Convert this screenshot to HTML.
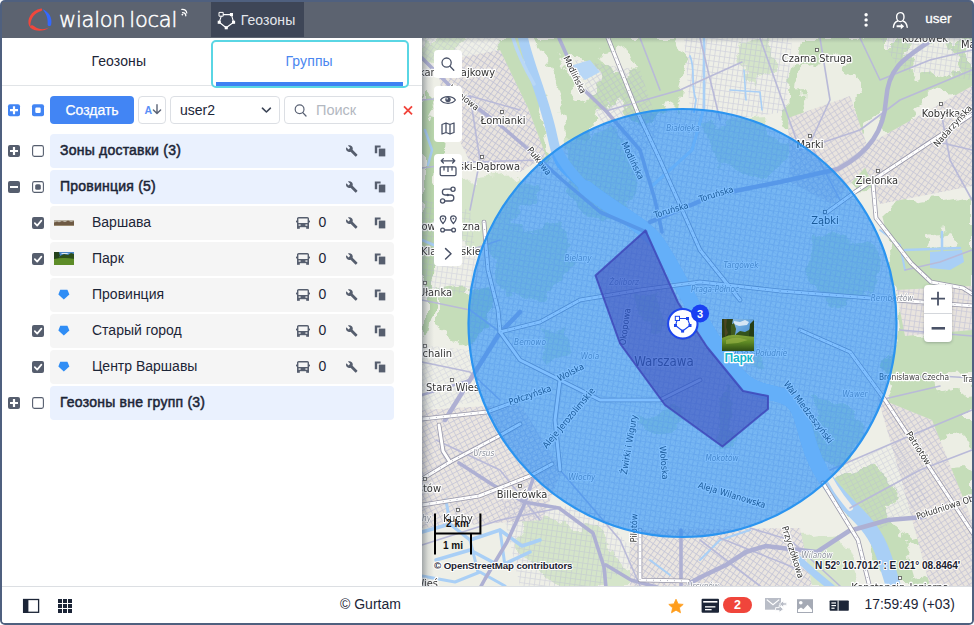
<!DOCTYPE html>
<html lang="ru">
<head>
<meta charset="utf-8">
<title>Wialon Local</title>
<style>
*{box-sizing:border-box;margin:0;padding:0}
html,body{width:974px;height:625px;overflow:hidden;background:#fff;font-family:"Liberation Sans",sans-serif;color:#1c2537}
#frame{position:absolute;left:0;top:0;width:974px;height:624.5px;background:#4f607f;border-radius:5px;overflow:hidden}
#inner{position:absolute;left:2px;top:2px;width:970px;height:620.5px;background:#fff;border-radius:0 0 3px 3px;overflow:hidden}
.abs{position:absolute}
/* header */
#hdr{position:absolute;left:0;top:0;width:970px;height:36px;background:#5c6370}
#hdr .tab{position:absolute;left:209px;top:0;width:93px;height:35px;background:#3e4657}
#hdr .tab span{position:absolute;left:29.7px;top:10px;font-size:14px;color:#e4e7ec;letter-spacing:0.1px}
#hdr .user{position:absolute;left:923.3px;top:9px;font-size:13.5px;color:#fff;-webkit-text-stroke:.3px #fff}
/* left panel */
#left{position:absolute;left:0;top:36px;width:420px;height:548px;background:#fff}
.t1{position:absolute;left:89.4px;top:14.8px;font-size:14px;letter-spacing:.12px;color:#1c2537}
.t2box{position:absolute;left:208.6px;top:2.2px;width:198.6px;height:48.2px;border:2px solid #5ad6e4;border-radius:5px;background:#fff}
.t2{position:absolute;left:283.4px;top:14.8px;font-size:14px;letter-spacing:.12px;color:#4a86f0}
.t2line{position:absolute;left:214px;top:44px;width:187px;height:4px;background:#3f82f3}
.btn{position:absolute;left:48px;top:58px;width:84px;height:28px;background:#4285f4;border-radius:4px;color:#fff;font-size:14px;text-align:center;line-height:28px;-webkit-text-stroke:.25px #fff}
.ib{position:absolute;top:58px;height:28px;border:1px solid #dcdfe4;border-radius:4px;background:#fff}
.row{position:absolute;left:48px;width:344px;height:34px;border-radius:4px}
.g{background:#eaf1fe}
.i{background:#f5f5f5}
.row .nm{position:absolute;top:8.3px;font-size:14px;white-space:nowrap;color:#1c2537}
.g .nm{left:10px;font-weight:normal;font-size:14px;letter-spacing:0.22px;-webkit-text-stroke:.5px #1c2537}
.i .nm{left:42px}
.row .cnt{position:absolute;left:268.5px;top:8.3px;font-size:14px;color:#1c2537}
.ic{position:absolute}
/* footer */
#ftr{position:absolute;left:0;top:584px;width:970px;height:37px;background:#fff;border-top:1px solid #dcdfe3}
#ftr .cp{position:absolute;left:338px;top:8.8px;font-size:14px;color:#1c2537}
#ftr .tm{position:absolute;left:862.6px;top:9.8px;font-size:13.8px;color:#1c2537}
/* map */
#map{position:absolute;left:420px;top:36px;width:550px;height:548px;overflow:hidden;background:#eef0e4}
.mb{position:absolute;left:12px;width:28px;background:#fff;border-radius:4px}
</style>
</head>
<body>
<div id="frame"><div id="inner">

<div id="hdr">
  <div class="tab"><span>Геозоны</span></div>
  <div class="user">user</div>
<svg width="970" height="36" viewBox="2 2 970 36" style="position:absolute;left:0;top:0" fill="none" stroke-linecap="round" stroke-linejoin="round">
<!-- logo mark -->
<path d="M29.2,26 C26.6,19.8 30.6,10.6 41,8.6 C42.6,8.4 42.6,10.6 41.2,11 C34,13 30.6,18.6 30.4,25.6 C30.4,26.6 29.6,26.8 29.2,26Z" fill="#f0473c"/>
<path d="M29.8,26.4 C31.4,24.4 33.4,25.6 34.6,26.6 C38.6,29.6 44,30.2 48.8,27.6 C44.6,31.8 34.6,32 30.2,27.6 C29.8,27.2 29.6,26.8 29.8,26.4Z" fill="#f0473c"/>
<path d="M42.6,9.2 C48.6,11.6 52.6,17.4 51.2,24.4 C50.8,26.4 48,26.8 47.6,24.6 C48.2,18.6 46.4,13.6 42.6,9.2Z" fill="#3468ff"/>
<!-- signal -->
<path d="M182.6,12.6 a3.2,3.2 0 0 1 3.2,3.2" stroke="#fff" stroke-width="1.3"/>
<path d="M182.6,9.8 a6,6 0 0 1 6,6" stroke="#fff" stroke-width="1.3" opacity=".0"/>
<path d="M181.8,9.4 c2.8,-.2 4.6,1.2 5,3.6" stroke="#fff" stroke-width="1.2"/>
<circle cx="182.4" cy="14.6" r=".9" fill="#fff"/>
<!-- geofence icon -->
<g stroke="#fff" stroke-width="1.1">
<path d="M223.4,14.6 H231.4 L233.6,22.2 L226.2,27.8 L219.2,22.2 L221.2,16.4"/>
<rect x="219.4" y="12.4" width="3.8" height="3.8" stroke-width="1"/>
</g>
<g fill="#fff"><rect x="229.9" y="13" width="3.1" height="3.1"/><rect x="232" y="20.7" width="3.1" height="3.1"/><rect x="224.7" y="26.2" width="3.1" height="3.1"/><rect x="217.7" y="20.7" width="3.1" height="3.1"/></g>
<!-- dots -->
<g fill="#fff"><circle cx="866.1" cy="14.7" r="1.7"/><circle cx="866.1" cy="19.9" r="1.7"/><circle cx="866.1" cy="25.1" r="1.7"/></g>
<!-- user -->
<g stroke="#fff" stroke-width="1.4">
<path d="M900.3,12.6 c2.4,0 3.7,1.9 3.7,4.3 c0,2.5 -1.6,4.7 -3.7,4.7 c-2.1,0 -3.7,-2.2 -3.7,-4.7 c0,-2.4 1.3,-4.3 3.7,-4.3z"/>
<path d="M897.6,21 c-2.6,1 -3.9,3 -4.2,6.2 M903,21 c2.6,1 3.9,3 4.2,6.2"/>
</g>
<path d="M896.6,25.3 h4.2 v-1.9 l3.4,2.9 l-3.4,2.9 v-1.9 h-4.2z" fill="#fff"/>
</svg>
<div class="abs" style="left:57px;top:5.6px;font:200 21px 'DejaVu Sans Light','DejaVu Sans',sans-serif;font-weight:200;color:#fff;letter-spacing:-.25px;word-spacing:-2.5px;white-space:nowrap;-webkit-text-stroke:.5px #fff" id="logo">wialon local</div>

</div>

<div id="left">
  <div class="abs" style="left:0;top:47px;width:420px;height:1px;background:#e1e4e7"></div>
  <div class="t1">Геозоны</div>
  <div class="t2box"></div>
  <div class="t2">Группы</div>
  <div class="t2line"></div>
  <div class="btn">Создать</div>
  <div class="ib" style="left:136px;width:28px"></div>
  <div class="ib" style="left:168px;width:110px"><span class="abs" style="left:9px;top:5px;font-size:14px">user2</span></div>
  <div class="ib" style="left:282px;width:110px"><span class="abs" style="left:31px;top:5px;font-size:14.5px;color:#b3b8c1">Поиск</span></div>

  <div class="row g" style="top:95.7px"><span class="nm">Зоны доставки (3)</span></div>
  <div class="row g" style="top:131.7px"><span class="nm">Провинция (5)</span></div>
  <div class="row i" style="top:167.7px"><span class="nm">Варшава</span><span class="cnt">0</span></div>
  <div class="row i" style="top:203.7px"><span class="nm">Парк</span><span class="cnt">0</span></div>
  <div class="row i" style="top:239.7px"><span class="nm">Провинция</span><span class="cnt">0</span></div>
  <div class="row i" style="top:275.7px"><span class="nm">Старый город</span><span class="cnt">0</span></div>
  <div class="row i" style="top:311.7px"><span class="nm">Центр Варшавы</span><span class="cnt">0</span></div>
  <div class="row g" style="top:347.7px"><span class="nm">Геозоны вне групп (3)</span></div>
<svg width="420" height="548" viewBox="2 38 420 548" style="position:absolute;left:0;top:0;pointer-events:none" fill="none">
<rect x="8" y="104.2" width="12" height="12" rx="2" fill="#4285f4"/><path d="M14,106.2 V114.2 M10,110.2 H18" stroke="#fff" stroke-width="2.2"/>
<rect x="32" y="104.2" width="12" height="12" rx="2" fill="#4285f4"/><rect x="35.3" y="107.5" width="5.4" height="5.4" rx="1.2" fill="#fff"/>
<text x="144.4" y="113.6" style="font:bold 10.5px 'Liberation Sans',sans-serif;fill:#5b8ff7">A</text>
<path d="M157,104.8 V113.4 M153.4,110 L157,113.6 L160.6,110" stroke="#5a6274" stroke-width="1.4" stroke-linecap="round" stroke-linejoin="round"/>
<path d="M262.4,108.2 L266.4,112 L270.4,108.2" stroke="#3c4456" stroke-width="1.6" stroke-linecap="round" stroke-linejoin="round"/>
<circle cx="299.6" cy="109.2" r="4.4" stroke="#5a6274" stroke-width="1.2"/><path d="M302.8,112.6 L306,116" stroke="#5a6274" stroke-width="1.3" stroke-linecap="round"/>
<path d="M404,106.4 L412,114.4 M412,106.4 L404,114.4" stroke="#f1433a" stroke-width="1.8" stroke-linecap="butt"/>
<rect x="8" y="145" width="12" height="12" rx="2" fill="#565e6e"/><path d="M14,147 V155 M10,151 H18" stroke="#fff" stroke-width="2.2"/><rect x="32.6" y="145.6" width="10.8" height="10.8" rx="1.8" fill="#fff" stroke="#565e6e" stroke-width="1.1"/><path transform="translate(345.5,144.7) scale(.52)" fill="#565e6e" d="M22.7 19l-9.1-9.1c.9-2.3.4-5-1.5-6.9-2-2-5-2.4-7.4-1.3L9 6 6 9 1.6 4.7C.4 7.1.9 10.1 2.9 12.1c1.9 1.9 4.6 2.4 6.9 1.5l9.1 9.1c.4.4 1 .4 1.4 0l2.3-2.3c.5-.4.5-1.1.1-1.4z"/><g transform="translate(374.8,145.6)" fill="#565e6e"><path d="M0,0 H5.8 V1.8 H2.4 V7.6 H0Z"/><rect x="4" y="3" width="6.5" height="7.8"/></g>
<rect x="8" y="181" width="12" height="12" rx="2" fill="#565e6e"/><path d="M10,187 H18" stroke="#fff" stroke-width="2.2"/><rect x="32.6" y="181.6" width="10.8" height="10.8" rx="1.8" fill="#fff" stroke="#565e6e" stroke-width="1.1"/><rect x="35.2" y="184.2" width="5.6" height="5.6" rx="1.6" fill="#565e6e"/><path transform="translate(345.5,180.7) scale(.52)" fill="#565e6e" d="M22.7 19l-9.1-9.1c.9-2.3.4-5-1.5-6.9-2-2-5-2.4-7.4-1.3L9 6 6 9 1.6 4.7C.4 7.1.9 10.1 2.9 12.1c1.9 1.9 4.6 2.4 6.9 1.5l9.1 9.1c.4.4 1 .4 1.4 0l2.3-2.3c.5-.4.5-1.1.1-1.4z"/><g transform="translate(374.8,181.6)" fill="#565e6e"><path d="M0,0 H5.8 V1.8 H2.4 V7.6 H0Z"/><rect x="4" y="3" width="6.5" height="7.8"/></g>
<rect x="32" y="217" width="12" height="12" rx="2" fill="#565e6e"/><path d="M34.8,223.2 L37.2,225.6 L41.4,220.6" stroke="#fff" stroke-width="1.7" stroke-linecap="round" stroke-linejoin="round"/>
<g transform="translate(296,217)"><path d="M1.7,6.2 V1.6 C1.7,1 2.1,.7 2.7,.7 H11.3 C11.9,.7 12.3,1 12.3,1.6 V6.2" fill="none" stroke="#565e6e" stroke-width="1.4"/><rect x="1" y="6" width="12" height="4.2" fill="#565e6e"/><rect x="0" y="3.6" width="1.2" height="1.8" fill="#565e6e"/><rect x="12.8" y="3.6" width="1.2" height="1.8" fill="#565e6e"/><rect x="1" y="10" width="2.8" height="1.8" fill="#565e6e"/><rect x="10.2" y="10" width="2.8" height="1.8" fill="#565e6e"/><rect x="2.6" y="7.4" width="2" height="1.3" fill="#f5f5f5"/><rect x="9.4" y="7.4" width="2" height="1.3" fill="#f5f5f5"/></g><path transform="translate(345.5,216.7) scale(.52)" fill="#565e6e" d="M22.7 19l-9.1-9.1c.9-2.3.4-5-1.5-6.9-2-2-5-2.4-7.4-1.3L9 6 6 9 1.6 4.7C.4 7.1.9 10.1 2.9 12.1c1.9 1.9 4.6 2.4 6.9 1.5l9.1 9.1c.4.4 1 .4 1.4 0l2.3-2.3c.5-.4.5-1.1.1-1.4z"/><g transform="translate(374.8,217.6)" fill="#565e6e"><path d="M0,0 H5.8 V1.8 H2.4 V7.6 H0Z"/><rect x="4" y="3" width="6.5" height="7.8"/></g>
<rect x="32" y="253" width="12" height="12" rx="2" fill="#565e6e"/><path d="M34.8,259.2 L37.2,261.6 L41.4,256.6" stroke="#fff" stroke-width="1.7" stroke-linecap="round" stroke-linejoin="round"/>
<g transform="translate(296,253)"><path d="M1.7,6.2 V1.6 C1.7,1 2.1,.7 2.7,.7 H11.3 C11.9,.7 12.3,1 12.3,1.6 V6.2" fill="none" stroke="#565e6e" stroke-width="1.4"/><rect x="1" y="6" width="12" height="4.2" fill="#565e6e"/><rect x="0" y="3.6" width="1.2" height="1.8" fill="#565e6e"/><rect x="12.8" y="3.6" width="1.2" height="1.8" fill="#565e6e"/><rect x="1" y="10" width="2.8" height="1.8" fill="#565e6e"/><rect x="10.2" y="10" width="2.8" height="1.8" fill="#565e6e"/><rect x="2.6" y="7.4" width="2" height="1.3" fill="#f5f5f5"/><rect x="9.4" y="7.4" width="2" height="1.3" fill="#f5f5f5"/></g><path transform="translate(345.5,252.7) scale(.52)" fill="#565e6e" d="M22.7 19l-9.1-9.1c.9-2.3.4-5-1.5-6.9-2-2-5-2.4-7.4-1.3L9 6 6 9 1.6 4.7C.4 7.1.9 10.1 2.9 12.1c1.9 1.9 4.6 2.4 6.9 1.5l9.1 9.1c.4.4 1 .4 1.4 0l2.3-2.3c.5-.4.5-1.1.1-1.4z"/><g transform="translate(374.8,253.6)" fill="#565e6e"><path d="M0,0 H5.8 V1.8 H2.4 V7.6 H0Z"/><rect x="4" y="3" width="6.5" height="7.8"/></g>
<g transform="translate(296,289)"><path d="M1.7,6.2 V1.6 C1.7,1 2.1,.7 2.7,.7 H11.3 C11.9,.7 12.3,1 12.3,1.6 V6.2" fill="none" stroke="#565e6e" stroke-width="1.4"/><rect x="1" y="6" width="12" height="4.2" fill="#565e6e"/><rect x="0" y="3.6" width="1.2" height="1.8" fill="#565e6e"/><rect x="12.8" y="3.6" width="1.2" height="1.8" fill="#565e6e"/><rect x="1" y="10" width="2.8" height="1.8" fill="#565e6e"/><rect x="10.2" y="10" width="2.8" height="1.8" fill="#565e6e"/><rect x="2.6" y="7.4" width="2" height="1.3" fill="#f5f5f5"/><rect x="9.4" y="7.4" width="2" height="1.3" fill="#f5f5f5"/></g><path transform="translate(345.5,288.7) scale(.52)" fill="#565e6e" d="M22.7 19l-9.1-9.1c.9-2.3.4-5-1.5-6.9-2-2-5-2.4-7.4-1.3L9 6 6 9 1.6 4.7C.4 7.1.9 10.1 2.9 12.1c1.9 1.9 4.6 2.4 6.9 1.5l9.1 9.1c.4.4 1 .4 1.4 0l2.3-2.3c.5-.4.5-1.1.1-1.4z"/><g transform="translate(374.8,289.6)" fill="#565e6e"><path d="M0,0 H5.8 V1.8 H2.4 V7.6 H0Z"/><rect x="4" y="3" width="6.5" height="7.8"/></g>
<rect x="32" y="325" width="12" height="12" rx="2" fill="#565e6e"/><path d="M34.8,331.2 L37.2,333.6 L41.4,328.6" stroke="#fff" stroke-width="1.7" stroke-linecap="round" stroke-linejoin="round"/>
<g transform="translate(296,325)"><path d="M1.7,6.2 V1.6 C1.7,1 2.1,.7 2.7,.7 H11.3 C11.9,.7 12.3,1 12.3,1.6 V6.2" fill="none" stroke="#565e6e" stroke-width="1.4"/><rect x="1" y="6" width="12" height="4.2" fill="#565e6e"/><rect x="0" y="3.6" width="1.2" height="1.8" fill="#565e6e"/><rect x="12.8" y="3.6" width="1.2" height="1.8" fill="#565e6e"/><rect x="1" y="10" width="2.8" height="1.8" fill="#565e6e"/><rect x="10.2" y="10" width="2.8" height="1.8" fill="#565e6e"/><rect x="2.6" y="7.4" width="2" height="1.3" fill="#f5f5f5"/><rect x="9.4" y="7.4" width="2" height="1.3" fill="#f5f5f5"/></g><path transform="translate(345.5,324.7) scale(.52)" fill="#565e6e" d="M22.7 19l-9.1-9.1c.9-2.3.4-5-1.5-6.9-2-2-5-2.4-7.4-1.3L9 6 6 9 1.6 4.7C.4 7.1.9 10.1 2.9 12.1c1.9 1.9 4.6 2.4 6.9 1.5l9.1 9.1c.4.4 1 .4 1.4 0l2.3-2.3c.5-.4.5-1.1.1-1.4z"/><g transform="translate(374.8,325.6)" fill="#565e6e"><path d="M0,0 H5.8 V1.8 H2.4 V7.6 H0Z"/><rect x="4" y="3" width="6.5" height="7.8"/></g>
<rect x="32" y="361" width="12" height="12" rx="2" fill="#565e6e"/><path d="M34.8,367.2 L37.2,369.6 L41.4,364.6" stroke="#fff" stroke-width="1.7" stroke-linecap="round" stroke-linejoin="round"/>
<g transform="translate(296,361)"><path d="M1.7,6.2 V1.6 C1.7,1 2.1,.7 2.7,.7 H11.3 C11.9,.7 12.3,1 12.3,1.6 V6.2" fill="none" stroke="#565e6e" stroke-width="1.4"/><rect x="1" y="6" width="12" height="4.2" fill="#565e6e"/><rect x="0" y="3.6" width="1.2" height="1.8" fill="#565e6e"/><rect x="12.8" y="3.6" width="1.2" height="1.8" fill="#565e6e"/><rect x="1" y="10" width="2.8" height="1.8" fill="#565e6e"/><rect x="10.2" y="10" width="2.8" height="1.8" fill="#565e6e"/><rect x="2.6" y="7.4" width="2" height="1.3" fill="#f5f5f5"/><rect x="9.4" y="7.4" width="2" height="1.3" fill="#f5f5f5"/></g><path transform="translate(345.5,360.7) scale(.52)" fill="#565e6e" d="M22.7 19l-9.1-9.1c.9-2.3.4-5-1.5-6.9-2-2-5-2.4-7.4-1.3L9 6 6 9 1.6 4.7C.4 7.1.9 10.1 2.9 12.1c1.9 1.9 4.6 2.4 6.9 1.5l9.1 9.1c.4.4 1 .4 1.4 0l2.3-2.3c.5-.4.5-1.1.1-1.4z"/><g transform="translate(374.8,361.6)" fill="#565e6e"><path d="M0,0 H5.8 V1.8 H2.4 V7.6 H0Z"/><rect x="4" y="3" width="6.5" height="7.8"/></g>
<path d="M60.2,289.8 H67.4 L69.4,294.6 L63.8,299.40000000000003 L58.4,294.6Z" fill="#2f8df5"/>
<path d="M60.2,325.8 H67.4 L69.4,330.6 L63.8,335.40000000000003 L58.4,330.6Z" fill="#2f8df5"/>
<path d="M60.2,361.8 H67.4 L69.4,366.6 L63.8,371.40000000000003 L58.4,366.6Z" fill="#2f8df5"/>
<rect x="8" y="397" width="12" height="12" rx="2" fill="#565e6e"/><path d="M14,399 V407 M10,403 H18" stroke="#fff" stroke-width="2.2"/><rect x="32.6" y="397.6" width="10.8" height="10.8" rx="1.8" fill="#fff" stroke="#565e6e" stroke-width="1.1"/>
<g style="filter:blur(.3px)"><rect x="54" y="220" width="20" height="6" fill="#8a7a66"/><rect x="54" y="220" width="20" height="2.2" fill="#b9b2a4"/><path d="M54,223 l3,-1.6 l2,1 l3,-1.4 l3,1.2 l3,-1.6 l3,1.4 l3,-1 v4 h-20z" fill="#6e5a44"/><rect x="54" y="225" width="20" height="1" fill="#9a8a70"/></g>
<g style="filter:blur(.3px)"><rect x="54" y="252" width="20" height="13" fill="#2f5a1e"/><rect x="54" y="252" width="20" height="5" fill="#4a86c8"/><path d="M54,252 h5 l1,4 l-2,3 h-4z" fill="#23401a"/><path d="M60,256 l4,-2 l4,1 l3,-2 l3,1 v4 h-14z" fill="#2d4f1c"/><path d="M54,259 q10,-2 20,0 v6 h-20z" fill="#5d8c28"/><path d="M61,253 h6 l2,1 h-7z" fill="#dfe9f2"/></g>
</svg>
</div>

<div id="map">
<svg width="550" height="548" viewBox="422 38 550 548" style="position:absolute;left:0;top:0">
<style>
.t{font:11px "DejaVu Sans Condensed","DejaVu Sans",sans-serif;font-stretch:condensed;fill:#333;stroke:#fff;stroke-width:2.4px;paint-order:stroke;stroke-linejoin:round}
.s{font-size:8.3px;fill:#444}
.d{font:italic 8.2px "DejaVu Sans Condensed","DejaVu Sans",sans-serif;font-stretch:condensed;fill:#8a8f9a;stroke:#fff;stroke-width:1.6px;paint-order:stroke;stroke-linejoin:round}
.r{font:9px "DejaVu Sans Condensed","DejaVu Sans",sans-serif;font-stretch:condensed;fill:#333;stroke:#fff;stroke-width:2.2px;paint-order:stroke;stroke-linejoin:round}
.big{font:13.2px "DejaVu Sans Condensed","DejaVu Sans",sans-serif;font-stretch:condensed;fill:#444;stroke:#fff;stroke-width:2.2px;paint-order:stroke;stroke-linejoin:round}
</style>
<defs>
  <pattern id="pa" width="4.6" height="5.4" patternUnits="userSpaceOnUse" patternTransform="rotate(35)"><path d="M0 .5H4.6M.5 0V5.4" stroke="#b3b6d2" stroke-width="0.8" fill="none"/></pattern>
  <pattern id="pb" width="5.2" height="4.6" patternUnits="userSpaceOnUse" patternTransform="rotate(-28)"><path d="M0 .5H5.2M.5 0V4.6" stroke="#b6b8d3" stroke-width="0.8" fill="none"/></pattern>
  <pattern id="pc" width="5" height="5.6" patternUnits="userSpaceOnUse" patternTransform="rotate(8)"><path d="M0 .5H5M.5 0V5.6" stroke="#b6b8d3" stroke-width="0.8" fill="none"/></pattern>
  <pattern id="pd" width="4.8" height="5" patternUnits="userSpaceOnUse" patternTransform="rotate(57)"><path d="M0 .5H4.8M.5 0V5" stroke="#b4b6d2" stroke-width="0.8" fill="none"/></pattern>
  <pattern id="pg" width="9" height="9" patternUnits="userSpaceOnUse"><rect x="2" y="3" width="1.4" height="1.4" fill="#b5d3a6"/><rect x="6.5" y="7" width="1.2" height="1.2" fill="#bcd8ae"/></pattern>
  <linearGradient id="shl" x1="0" x2="1" y1="0" y2="0"><stop offset="0" stop-color="#3c4654" stop-opacity=".42"/><stop offset=".5" stop-color="#3c4654" stop-opacity=".12"/><stop offset="1" stop-color="#3c4654" stop-opacity="0"/></linearGradient>
  <linearGradient id="sht" x1="0" x2="0" y1="0" y2="1"><stop offset="0" stop-color="#3c4654" stop-opacity=".2"/><stop offset="1" stop-color="#3c4654" stop-opacity="0"/></linearGradient>
  <filter id="org" filterUnits="userSpaceOnUse" x="400" y="20" width="600" height="590"><feTurbulence type="fractalNoise" baseFrequency="0.028" numOctaves="4" seed="5" result="t"/><feDisplacementMap in="SourceGraphic" in2="t" scale="34" xChannelSelector="R" yChannelSelector="G"/></filter>
  <filter id="org2" filterUnits="userSpaceOnUse" x="400" y="20" width="600" height="590"><feTurbulence type="fractalNoise" baseFrequency="0.045" numOctaves="4" seed="11" result="t"/><feDisplacementMap in="SourceGraphic" in2="t" scale="30" xChannelSelector="R" yChannelSelector="G"/></filter>
  <clipPath id="cin"><circle cx="682.5" cy="323" r="214"/></clipPath>
  <clipPath id="cp"><rect x="422" y="38" width="550" height="548"/></clipPath>
</defs>
<g clip-path="url(#cp)">
<g id="base" style="filter:blur(.45px)">
<rect x="420" y="36" width="554" height="552" fill="#eeefe7"/>
<g filter="url(#org)">
<g fill="#c5ddb9">
<path d="M422,92 L431,98 L437,128 L435,180 L440,215 L434,262 L437,300 L429,334 L422,340Z" fill="#b9d6ac"/>
<path d="M498,38 L519,38 L528,72 L541,104 L549,137 L554,156 L546,160 L533,140 L520,112 L505,78Z"/>
<path d="M532,38 L676,38 L688,70 L678,108 L652,120 L612,100 L592,128 L572,152 L562,122 L551,82Z"/>
<path d="M796,38 L974,38 L974,86 L930,100 L905,112 L896,160 L862,196 L832,172 L800,150 L786,110 L790,70Z"/>
<path d="M742,44 L770,40 L776,70 L750,78Z" fill="#d5e5ca"/>
<path d="M885,205 L974,190 L974,500 L934,492 L905,420 L884,380 L900,330 L893,266Z"/>
<path d="M838,482 L878,470 L900,500 L958,520 L974,586 L898,586 L868,540Z"/>
<path d="M520,516 L600,532 L642,586 L560,586 L530,560Z" fill="#d5e5ca"/>
<path d="M440,290 L482,284 L492,330 L462,346 L440,330Z"/>
<path d="M486,232 L520,222 L560,228 L572,262 L548,296 L512,300 L490,276Z" fill="#d3e4c8"/>
<path d="M806,236 L850,230 L878,262 L868,296 L830,300 L804,276Z" fill="#d3e4c8"/>
<path d="M566,136 L610,128 L640,160 L634,206 L600,226 L572,196Z" fill="#d3e4c8"/>
<path d="M700,120 L760,116 L790,150 L760,176 L716,170Z" fill="#d5e5ca"/>
<path d="M806,404 L850,398 L866,440 L840,472 L812,452Z" fill="#d3e4c8"/>
<path d="M716,398 L734,396 L738,440 L722,444Z" fill="#d3e4c8"/>
<path d="M736,338 L762,336 L766,364 L740,368Z" fill="#d3e4c8"/>
<path d="M540,330 L566,326 L572,352 L546,356Z" fill="#d5e5ca"/>
<path d="M640,300 L660,296 L664,318 L644,322Z" fill="#d5e5ca"/>
<path d="M640,410 L672,406 L676,428 L646,432Z" fill="#d5e5ca"/>

<path d="M455,180 L520,172 L540,200 L500,240 L470,250 L452,220Z" fill="#d5e5ca"/>
<path d="M790,540 L840,535 L860,586 L800,586Z" fill="#d5e5ca"/>
<path d="M422,38 L470,38 L460,55 L430,60 L422,58Z" fill="#d5e5ca"/>
<path d="M640,540 L700,545 L690,586 L650,586Z" fill="#e0e9d4"/>
</g>
</g>
<g filter="url(#org2)" fill="#eceee4">
<path d="M560,60 L580,56 L600,80 L590,100 L570,90Z"/>
<path d="M800,70 L840,60 L860,90 L850,120 L815,125 L798,100Z"/>
<path d="M860,120 L885,110 L890,150 L868,168Z"/>
<path d="M900,46 L950,40 L960,70 L920,80Z"/>
<path d="M925,232 L955,228 L960,246 L930,248Z"/>
<path d="M905,300 L940,296 L950,330 L915,336Z"/>
<path d="M935,372 L974,368 L974,392 L940,396Z"/>
<path d="M930,440 L965,436 L970,466 L938,470Z"/>
<path d="M880,500 L920,492 L935,530 L900,540Z"/>
<path d="M905,545 L950,540 L960,575 L915,580Z"/>
<path d="M600,50 L630,46 L640,70 L612,76Z"/>
</g>
<g>
<path d="M436,62 L500,50 L528,108 L546,156 L520,172 L470,162 L446,112Z" fill="#e9e4de"/>
<path d="M436,62 L500,50 L528,108 L546,156 L520,172 L470,162 L446,112Z" fill="url(#pa)" opacity=".75"/>
<path d="M422,38 L500,38 L500,50 L436,62 L422,60Z" fill="url(#pa)" opacity=".35"/>
<path d="M575,60 L640,70 L660,130 L640,160 L600,120Z" fill="url(#pd)" opacity=".5"/>
<path d="M788,118 L850,96 L872,160 L832,204 L790,182Z" fill="#e9e4de"/>
<path d="M788,118 L850,96 L872,160 L832,204 L790,182Z" fill="url(#pd)" opacity=".6"/>
<path d="M858,150 L972,86 L972,186 L880,204Z" fill="#e9e4de"/>
<path d="M858,150 L972,86 L972,186 L880,204Z" fill="url(#pa)" opacity=".65"/>
<path d="M684,38 L792,38 L786,112 L740,118 L690,112Z" fill="url(#pc)" opacity=".5"/>
<path d="M880,38 L972,38 L972,80 L900,70Z" fill="url(#pc)" opacity=".45"/>
<path d="M422,410 L520,404 L562,470 L542,520 L422,528Z" fill="#ebe6e0"/>
<path d="M422,410 L520,404 L562,470 L542,520 L422,528Z" fill="url(#pb)" opacity=".7"/>
<path d="M422,345 L470,350 L490,400 L422,410Z" fill="url(#pb)" opacity=".35"/>
<path d="M422,200 L470,210 L480,290 L422,300Z" fill="url(#pc)" opacity=".4"/>
<path d="M500,500 L600,510 L640,560 L600,586 L520,586Z" fill="url(#pc)" opacity=".45"/>
<path d="M630,530 L800,528 L812,586 L630,586Z" fill="#ebe6e0"/>
<path d="M630,530 L800,528 L812,586 L630,586Z" fill="url(#pa)" opacity=".7"/>
<path d="M878,398 L932,420 L972,520 L972,586 L930,586 L902,482Z" fill="#e9e4de"/>
<path d="M878,398 L932,420 L972,520 L972,586 L930,586 L902,482Z" fill="url(#pd)" opacity=".65"/>
<path d="M896,290 L972,286 L972,330 L905,336Z" fill="#e9e4de"/>
<path d="M896,290 L972,286 L972,330 L905,336Z" fill="url(#pc)" opacity=".6"/>
<path d="M830,470 L900,440 L930,500 L880,530Z" fill="url(#pb)" opacity=".4"/>
<circle cx="682" cy="323" r="214" fill="url(#pc)" opacity=".55"/>
<circle cx="682" cy="323" r="214" fill="url(#pa)" opacity=".3"/>
</g>
<g fill="none" stroke="#a9cff6" stroke-linecap="round" stroke-linejoin="round">
<path d="M523,38 C529,66 544,98 552,135 S562,164 586,188" stroke-width="10"/>
<path d="M513,38 C518,55 526,70 534,84" stroke-width="3.5" stroke="#b8d7f6"/>
<path d="M586,188 C610,208 640,222 655,240 S690,305 716,345 S748,388 776,394 S800,420 812,452" stroke-width="15"/>
<path d="M812,452 C825,488 850,505 866,524 S885,560 894,588" stroke-width="15"/>
<path d="M826,470 C832,486 842,498 850,508" stroke-width="6" stroke="#f0eee7"/>
<path d="M704,36 L704,108 L692,150 L652,186" stroke-width="2.6"/>
<path d="M690,56 C696,70 690,84 696,100 L694,112" stroke-width="1.8"/>
<path d="M730,90 L760,92 L762,110 M744,70 L746,100" stroke-width="1.6"/>
<path d="M422,532 L450,524 L470,540 L500,530 L522,546 L540,540" stroke-width="3.5"/>
<path d="M436,560 L470,550 L500,566 L530,552" stroke-width="3.5"/>
<path d="M422,576 L455,582 L480,572 L505,586" stroke-width="3"/>
<path d="M470,540 L478,572 M500,530 L505,566 M450,524 L446,500" stroke-width="3"/>
<path d="M795,556 L815,574 L832,588" stroke-width="7"/>
<path d="M422,240 L436,246 L444,262" stroke-width="2.5"/>
<path d="M425,130 L432,150 L428,165" stroke-width="2.5"/>
<path d="M905,250 L960,248 M942,232 L942,262" stroke-width="2.5"/>
<path d="M700,560 L720,540 L750,530 M650,560 L670,575" stroke-width="2"/>
<path d="M880,230 L900,245 L905,270" stroke-width="2"/>
</g>
<g clip-path="url(#cin)" fill="none" stroke="#c9def3" stroke-linecap="round" stroke-linejoin="round">
<path d="M552,135 C556,150 562,164 586,188" stroke-width="10"/>
<path d="M586,188 C610,208 640,222 655,240 S690,305 716,345 S748,388 776,394 S800,420 812,452" stroke-width="15"/>
<path d="M812,452 C825,488 850,505 866,524" stroke-width="15"/>
<path d="M704,108 L692,150 L652,186" stroke-width="2.6"/>
</g>
<path d="M930,252 L962,250 L964,262 L950,270 L930,268Z" fill="#a9cff6"/>
<path d="M570,66 L590,60 L600,72 L585,80Z" fill="#b8d7f6"/>
<g fill="none" stroke-linecap="round" stroke-linejoin="round">
<g stroke="#b9bad8" stroke-width="1.6">
<path d="M422,100 L470,96 L520,110"/><path d="M470,96 L480,160 L470,210"/><path d="M422,168 L470,162 L540,160"/>
<path d="M422,250 L470,250 L500,240"/><path d="M422,300 L470,310 L500,332"/><path d="M422,362 L470,372 L500,400"/>
<path d="M436,440 L500,470 L540,520"/><path d="M560,470 L620,540 L640,586"/><path d="M422,545 L500,520 L560,508"/>
<path d="M700,540 L760,586"/><path d="M720,538 L800,570"/><path d="M750,528 L790,540 L840,586"/>
<path d="M830,470 L900,440 L972,410"/><path d="M850,508 L920,470 L972,450"/><path d="M880,400 L940,386"/>
<path d="M897,378 L940,376 L972,378"/><path d="M900,330 L972,336"/><path d="M905,270 L940,262 L972,250"/>
<path d="M800,150 L860,130 L900,100 L972,70"/><path d="M810,143 L840,200"/><path d="M760,38 L800,150"/>
<path d="M820,38 L830,100 L810,143"/><path d="M860,38 L880,80 L930,60 L972,50"/><path d="M877,178 L930,140 L972,150"/>
<path d="M606,111 L680,90 L742,62"/><path d="M640,38 L660,90"/><path d="M700,38 L720,120"/>
<path d="M941,112 L950,160 L972,200"/>
</g>
<g stroke="#aeb0d3" stroke-width="3.6">
<path d="M422,58 L455,91 L500,125 L537,157 L560,178 L600,212 L646,232"/>
<path d="M559,38 L581,87 L606,111 L640,150 L655,200 L662,232"/>
<path d="M650,222 L715,195 L780,182 L838,169 C870,152 884,130 886,100 S900,60 935,38" stroke-width="4.5"/>
<path d="M445,420 L470,380 L499,334 L520,312" stroke-width="4.5"/>
<path d="M459,463 L493,485 L524,502 L559,508 L593,533 L604,567 L606,588"/>
<path d="M533,479 L524,505 L507,542 L485,579 L480,588"/>
<path d="M606,565 L631,580 L660,588"/>
<path d="M690,583 L701,577 L726,565 L746,552 L766,546 L790,549 L817,552 L849,531 L888,520 L924,517" stroke-width="4.5"/>
<path d="M681,530 L681,588"/>
<path d="M422,395 L470,380" stroke-width="2.5"/>
</g>
<g stroke="#9897a8" stroke-width="4.6">
<path id="w1" d="M826,213 L855,192 L974,113"/>
<path id="w2" d="M873,184 L876,218 L911,263 L931,282 L963,288 L974,295"/>
<path id="w3" d="M780,291 L896,300 L974,306"/>
<path id="w4" d="M800,330 L850,352 L885,400 L974,535"/>
<path id="w5" d="M823,483 L858,540 L870,588"/>
<path id="w6" d="M640,530 L640,580 L688,581"/>
<path id="w7" d="M422,419 L487,412 L520,400"/>
<path id="w8" d="M422,479 L450,462 L499,436 L520,424"/>
<path id="w9" d="M422,505 L479,496 L530,476 L552,464"/>
<path id="w10" d="M439,425 L443,451 L450,462"/>
<path id="w11" d="M484,222 L488,270 L498,310 L500,332 L540,322 L580,300 L640,290 L700,282 L780,291"/>
<path id="w12" d="M608,38 L637,111 L660,160 L700,250 L740,300"/>
<path id="w13" d="M500,332 L520,360 L560,380 L600,400 L660,400 L700,380"/>
<path id="w14" d="M560,380 L555,420 L560,470"/>
</g>
<g stroke="#fff" stroke-width="3">
<use href="#w1"/><use href="#w2"/><use href="#w3"/><use href="#w4"/><use href="#w5"/><use href="#w6"/><use href="#w7"/><use href="#w8"/><use href="#w9"/><use href="#w10"/><use href="#w11"/><use href="#w12"/><use href="#w13"/><use href="#w14"/>
</g>
<g stroke="#b9b9c6" stroke-width="1" stroke-dasharray="1 6" stroke-linecap="butt">
<use href="#w1"/><use href="#w2"/><use href="#w3"/><use href="#w4"/><use href="#w5"/><use href="#w6"/><use href="#w7"/><use href="#w8"/><use href="#w9"/><use href="#w11"/><use href="#w12"/>
</g>
</g>
<g>
<text x="495" y="76" class="t" text-anchor="end">Dziekanów Bajkowy</text>
<rect x="500.5" y="110.5" width="3" height="3" fill="#fff" stroke="#555" stroke-width=".8"/>
<text x="503" y="124" class="t" text-anchor="middle">Łomianki</text>
<rect x="480.5" y="155.5" width="3" height="3" fill="#fff" stroke="#555" stroke-width=".8"/>
<text x="520" y="170" class="t" text-anchor="end">Polski-Dąbrowa</text>
<text x="480" y="230" class="t" text-anchor="end">Janowszczyzna</text>
<text x="421" y="255" class="t" text-anchor="start">Klaudyńskie</text>
<rect x="423.5" y="281.5" width="3" height="3" fill="#fff" stroke="#555" stroke-width=".8"/>
<text x="452" y="296" class="t" text-anchor="end">Ułanka</text>
<rect x="423.5" y="344.5" width="3" height="3" fill="#fff" stroke="#555" stroke-width=".8"/>
<text x="452" y="357" class="t" text-anchor="end">Michalin</text>
<rect x="450.5" y="378.5" width="3" height="3" fill="#fff" stroke="#555" stroke-width=".8"/>
<text x="426" y="391" class="t" text-anchor="start">Stara Wieś</text>
<rect x="423.5" y="477.5" width="3" height="3" fill="#fff" stroke="#555" stroke-width=".8"/>
<text x="441" y="492" class="t" text-anchor="end">Piastów</text>
<rect x="518.5" y="484.5" width="3" height="3" fill="#fff" stroke="#555" stroke-width=".8"/>
<text x="522" y="498" class="t" text-anchor="middle">Billerówka</text>
<rect x="456.5" y="508.5" width="3" height="3" fill="#fff" stroke="#555" stroke-width=".8"/>
<text x="458" y="522" class="t" text-anchor="middle">Kuchy</text>
<text x="438" y="587" class="t" text-anchor="end">Wieś</text>
<rect x="815.5" y="48.5" width="3" height="3" fill="#fff" stroke="#555" stroke-width=".8"/>
<text x="817" y="62" class="t" text-anchor="middle">Czarna Struga</text>
<rect x="808.5" y="134.5" width="3" height="3" fill="#fff" stroke="#555" stroke-width=".8"/>
<text x="810" y="148" class="t" text-anchor="middle">Marki</text>
<rect x="939.5" y="102.5" width="3" height="3" fill="#fff" stroke="#555" stroke-width=".8"/>
<text x="941" y="117" class="t" text-anchor="middle">Kobyłka</text>
<rect x="876.5" y="169.5" width="3" height="3" fill="#fff" stroke="#555" stroke-width=".8"/>
<text x="877" y="184" class="t" text-anchor="middle">Zielonka</text>
<rect x="823.5" y="210.5" width="3" height="3" fill="#fff" stroke="#555" stroke-width=".8"/>
<text x="825" y="224" class="t" text-anchor="middle">Ząbki</text>
<text x="925" y="42" class="t" text-anchor="middle">Kozłówek</text>
<text x="961" y="48" class="t" text-anchor="start">Ma</text>
<text x="914" y="380" class="t s" text-anchor="middle">Bronisława Czecha</text>
<text x="962" y="382" class="t s" text-anchor="start">Trakt</text>
<rect x="898.5" y="576.5" width="3" height="3" fill="#fff" stroke="#555" stroke-width=".8"/>
<text x="900" y="591" class="t" text-anchor="middle">Konstancin-Jeziorna</text>
<text x="484" y="456" class="d" text-anchor="middle">Ursus</text>
<text x="431" y="521" class="d" text-anchor="end">Malichy</text>
<text x="817" y="558" class="d" text-anchor="middle">Wilanów</text>
<text x="703" y="589" class="d" text-anchor="middle">Ursynów</text>
<text x="476" y="111" class="r" text-anchor="end" transform="rotate(38 476 111)">Kolejowa</text>
<text x="537" y="163" class="r" text-anchor="middle" transform="rotate(52 537 163)">Pułkowa</text>
<text x="572" y="76" class="r" text-anchor="middle" transform="rotate(64 572 76)">Modlińska</text>
<text x="955" y="128" class="r" text-anchor="middle" transform="rotate(-48 955 128)">Nadarzyńska</text>
<text x="916" y="450" class="r" text-anchor="middle" transform="rotate(57 916 450)">Patriotów</text>
<text x="962" y="505" class="r" text-anchor="middle" transform="rotate(-18 962 505)">Południowa Obwodnica</text>
<text x="790" y="553" class="r" text-anchor="middle" transform="rotate(72 790 553)">Przyczółkowa</text>
<text x="637" y="528" class="r" text-anchor="middle" transform="rotate(-88 637 528)">Pilotów</text>
<text x="683" y="131" class="d" text-anchor="middle">Białołęka</text>
<text x="578" y="261" class="d" text-anchor="middle">Bielany</text>
<text x="624" y="285" class="d" text-anchor="middle">Żoliborz</text>
<text x="530" y="345" class="d" text-anchor="middle">Bemowo</text>
<text x="590" y="359" class="d" text-anchor="middle">Wola</text>
<text x="715" y="292" class="d" text-anchor="middle">Praga-Północ</text>
<text x="741" y="268" class="d" text-anchor="middle">Targówek</text>
<text x="759.5" y="356" class="d" text-anchor="middle">Praga-Południe</text>
<text x="892" y="301" class="d" text-anchor="middle">Rembertów</text>
<text x="855" y="397" class="d" text-anchor="middle">Wawer</text>
<text x="722" y="461" class="d" text-anchor="middle">Mokotów</text>
<text x="582" y="480" class="d" text-anchor="middle">Włochy</text>
<text x="664" y="366" class="big" text-anchor="middle">Warszawa</text>
<text x="630" y="162" class="r" text-anchor="middle" transform="rotate(64 630 162)">Modlińska</text>
<text x="672" y="213" class="r" text-anchor="middle" transform="rotate(-17 672 213)">Toruńska</text>
<text x="717" y="197" class="r" text-anchor="middle" transform="rotate(-17 717 197)">Toruńska</text>
<text x="628" y="327" class="r" text-anchor="middle" transform="rotate(-82 628 327)">Okopowa</text>
<text x="531" y="398" class="r" text-anchor="middle" transform="rotate(-19 531 398)">Połczyńska</text>
<text x="572" y="375" class="r" text-anchor="middle" transform="rotate(-27 572 375)">Wolska</text>
<text x="571" y="420" class="r" text-anchor="middle" transform="rotate(-50 571 420)">Aleje Jerozolimskie</text>
<text x="632" y="445" class="r" text-anchor="middle" transform="rotate(-80 632 445)">Żwirki i Wigury</text>
<text x="661" y="463" class="r" text-anchor="middle" transform="rotate(85 661 463)">Wołoska</text>
<text x="731" y="498" class="r" text-anchor="middle" transform="rotate(17 731 498)">Aleja Wilanowska</text>
<text x="806" y="414" class="r" text-anchor="middle" transform="rotate(53 806 414)">Wał Miedzeszyński</text>
</g>
</g>
<circle cx="682.5" cy="323" r="214" fill="rgba(0,128,255,.5)" stroke="#2b94f0" stroke-width="2.2"/>
<path d="M645.5,230.5 L595.5,275.5 L620,343.5 L665,405 L722.5,446.5 L768,409 L768,396 L743,391 L707,347 L678,302.5Z" fill="rgba(54,60,178,.5)" stroke="rgba(62,72,186,.85)" stroke-width="2" stroke-linejoin="round"/>
<g>
<circle cx="683" cy="324.4" r="15.5" fill="#1a2a60" opacity=".18"/>
<circle cx="682.8" cy="323.7" r="14.7" fill="#fff" stroke="#1d46ee" stroke-width="2"/>
<g stroke="#1d46ee" stroke-width="1.1" fill="none"><path d="M677.5,318.5 L687.5,318.5 L690,325.5 L682.6,331 L675.5,325.5Z"/></g>
<rect x="675.3" y="316.3" width="4.2" height="4.2" fill="#fff" stroke="#1d46ee" stroke-width="1"/>
<g fill="#1d46ee"><rect x="686" y="317" width="3" height="3"/><rect x="688.5" y="324" width="3" height="3"/><rect x="681.1" y="329.6" width="3" height="3"/><rect x="674" y="324" width="3" height="3"/></g>
<circle cx="700.1" cy="313.5" r="9" fill="#1a40f2"/>
<text x="700.1" y="317.6" text-anchor="middle" style="font:bold 11px 'Liberation Sans',sans-serif;fill:#fff">3</text>
</g>
<g>
<defs><clipPath id="pk"><rect x="722" y="319" width="32" height="32"/></clipPath>
<linearGradient id="sky" x1="0" x2="1" y1="0" y2="1"><stop offset="0" stop-color="#9fc9ea"/><stop offset=".5" stop-color="#5f9fda"/><stop offset="1" stop-color="#3b7fc4"/></linearGradient>
<linearGradient id="grs" x1="0" x2="0" y1="0" y2="1"><stop offset="0" stop-color="#86a53a"/><stop offset=".45" stop-color="#5f8a24"/><stop offset="1" stop-color="#2f4d14"/></linearGradient></defs>
<g clip-path="url(#pk)" style="filter:blur(.4px)">
<rect x="722" y="319" width="32" height="32" fill="url(#sky)"/>
<path d="M734,321 l6,1 l5,-2 l4,2 l-2,3 l-8,1 l-5,-2z" fill="#e8f0f8" opacity=".85"/>
<path d="M722,319 h11 l-1,5 l2,4 l-1,6 l3,2 v4 h-14z" fill="#2c3f17"/>
<path d="M724,319 l3,0 l-1,8 l2,6 l-3,4z" fill="#5a4a2a" opacity=".7"/>
<path d="M731,325 l3,-2 l2,6 l-1,6 l-4,2z" fill="#3f5a1f"/>
<path d="M736,334 l4,-3 l5,1 l4,-2 l5,-6 v14 h-18z" fill="#33521c"/>
<path d="M750,324 l4,-4 v16 h-5z" fill="#263d14"/>
<path d="M722,338 q8,-4 16,-3 t16,2 v14 h-32z" fill="url(#grs)"/>
<path d="M726,340 q8,-3 14,-2 l8,2 l-10,3 l-12,1z" fill="#9db648" opacity=".6"/>
</g>
<text x="738.5" y="361.5" text-anchor="middle" style="font:bold 12px 'Liberation Sans',sans-serif;fill:#14b6cc;stroke:#fff;stroke-width:2.6px;paint-order:stroke;stroke-linejoin:round;letter-spacing:-.2px">Парк</text>
</g>
<rect x="422" y="38" width="12" height="548" fill="url(#shl)"/>
<rect x="422" y="38" width="550" height="5" fill="url(#sht)"/>
</g>
</svg>

<div class="mb" style="top:12px;height:28px"></div>
<div class="mb" style="top:48px;height:56px"></div>
<div class="mb" style="top:116px;height:112px"></div>
<div class="mb" style="left:502px;top:247px;height:57px;box-shadow:0 1px 3px rgba(40,50,60,.3)"><div style="position:absolute;left:0;top:27.5px;width:28px;height:1px;background:#d4d7dc"></div></div>
<svg width="550" height="548" viewBox="422 38 550 548" style="position:absolute;left:0;top:0" fill="none" stroke="#4a5267" stroke-width="1.3" stroke-linecap="round" stroke-linejoin="round">
<!-- search -->
<circle cx="446.6" cy="62.6" r="4.6"/><path d="M450,66.2 L453.8,70.2"/>
<!-- eye -->
<path d="M440.6,100 C443.5,95.6 452.5,95.6 455.4,100 C452.5,104.4 443.5,104.4 440.6,100Z"/>
<circle cx="448" cy="99.6" r="2.7" fill="#4a5267" stroke="none"/><circle cx="447.2" cy="98.7" r=".9" fill="#c9ccd6" stroke="none"/>
<!-- map -->
<path d="M442,124.5 L446,123 L450,124.5 L454,123 L454,132.5 L450,134 L446,132.5 L442,134Z M446,123 V132.5 M450,124.5 V134"/>
<!-- ruler -->
<path d="M441.2,160.8 H454.8 M443.4,158.6 L441.2,160.8 L443.4,163 M452.6,158.6 L454.8,160.8 L452.6,163"/>
<rect x="440.2" y="166.8" width="15.8" height="8.8" rx="1.4"/>
<path d="M444,166.8 V170 M448,166.8 V171.4 M452,166.8 V170"/>
<!-- route -->
<circle cx="453" cy="189.2" r="2.1"/><circle cx="442.6" cy="201" r="2.1"/>
<path d="M450.9,189.2 H445 C441.5,189.2 441.5,195 445,195 H451 C454.8,195 454.8,201 451,201 H444.7"/>
<circle cx="447.8" cy="195" r="1.2" fill="#4a5267" stroke="none"/>
<!-- pins -->
<path d="M443,223.6 C440.4,220.6 440.2,219.6 440.2,218.6 A2.8,2.8 0 0 1 445.8,218.6 C445.8,219.6 445.6,220.6 443,223.6Z"/>
<path d="M453.4,223.6 C450.8,220.6 450.6,219.6 450.6,218.6 A2.8,2.8 0 0 1 456.2,218.6 C456.2,219.6 456,220.6 453.4,223.6Z"/>
<circle cx="443" cy="218.6" r=".9" fill="#4a5267" stroke="none"/><circle cx="453.4" cy="218.6" r=".9" fill="#4a5267" stroke="none"/>
<circle cx="442.6" cy="230" r="1.9"/><circle cx="453.6" cy="230" r="1.9"/><path d="M444.5,230 H451.7"/>
<!-- chevron -->
<path d="M445.6,248.6 L451,253.8 L445.6,259" stroke-width="1.5"/>
<!-- zoom -->
<path d="M931,298.7 H945 M938,291.8 V305.6" stroke-width="1.8" stroke-linecap="butt"/>
<path d="M931.6,328.3 H945" stroke-width="2.6" stroke-linecap="butt"/>
<!-- scale -->
<g stroke="#000" stroke-width="2" stroke-linecap="butt" stroke-linejoin="miter">
<path d="M435,513.4 V554.6 M434,533.4 H481.4 M480.4,513.4 V533.4 M471,533.4 V554.6"/>
</g>
<g stroke="none" fill="#111" style="font:bold 10px 'Liberation Sans',sans-serif">
<text x="457.5" y="526.5" text-anchor="middle">2 km</text>
<text x="453" y="548.5" text-anchor="middle">1 mi</text>
<text x="434" y="568.6" style="font-size:9.7px;stroke:#fff;stroke-width:2px;paint-order:stroke;stroke-linejoin:round;fill:#1c2230;letter-spacing:-.1px">© OpenStreetMap contributors</text>
<text x="960" y="568.6" text-anchor="end" style="font-size:10.1px;stroke:#fff;stroke-width:2px;paint-order:stroke;stroke-linejoin:round;fill:#1c2230;letter-spacing:-.1px">N 52° 10.7012' : E 021° 08.8464'</text>
</g>
</svg>

</div>

<div id="ftr">
<svg width="970" height="37" viewBox="2 587 970 37" style="position:absolute;left:0;top:0" fill="none">
<!-- sidebar icon -->
<rect x="23.6" y="599.5" width="15" height="12.8" stroke="#1c2537" stroke-width="1.3"/><rect x="23" y="599" width="5.4" height="14" fill="#1c2537"/>
<!-- grid -->
<g fill="#1c2537">
<rect x="58" y="599" width="4" height="4"/><rect x="63" y="599" width="4" height="4"/><rect x="68" y="599" width="4" height="4"/>
<rect x="58" y="604" width="4" height="4"/><rect x="63" y="604" width="4" height="4"/><rect x="68" y="604" width="4" height="4"/>
<rect x="58" y="609" width="4" height="4"/><rect x="63" y="609" width="4" height="4"/><rect x="68" y="609" width="4" height="4"/>
</g>
<!-- star -->
<path d="M676,599.2 L678.1,603.9 L683.2,604.4 L679.4,607.8 L680.5,612.8 L676,610.2 L671.5,612.8 L672.6,607.8 L668.8,604.4 L673.9,603.9Z" fill="#ff9d1c" stroke="#ff9d1c" stroke-width=".8" stroke-linejoin="round"/>
<!-- notif window -->
<rect x="701.6" y="598.8" width="17.4" height="14" rx="1" fill="#1c2537"/>
<rect x="703.2" y="601" width="14.2" height="1.6" fill="#fff"/><rect x="705" y="606.2" width="10.4" height="1.3" fill="#fff"/><rect x="705" y="609" width="6.6" height="1.3" fill="#fff"/>
<!-- badge -->
<rect x="723" y="597" width="29" height="16" rx="8" fill="#f0453b"/>
<text x="737.5" y="609.4" text-anchor="middle" style="font:bold 12.5px 'Liberation Sans',sans-serif;fill:#fff">2</text>
<!-- mail disabled -->
<rect x="765" y="598" width="16" height="11.7" fill="#b9bdc7"/>
<path d="M766.8,599.6 L773,604.8 L779.2,599.6" stroke="#fff" stroke-width="1.2"/>
<path d="M786.8,602.8 H783.6 V600.6 L779.4,604 L783.6,607.4 V605.2 H786.8Z" fill="#b9bdc7" stroke="#fff" stroke-width=".9"/>
<path d="M775.6,607.6 H779.2 V605.4 L783.4,609.2 L779.2,612.6 V610.6 H775.6Z" fill="#b9bdc7" stroke="#fff" stroke-width=".9"/>
<!-- image disabled -->
<rect x="797" y="599.2" width="16" height="13.8" fill="#a5aab5"/>
<circle cx="800.8" cy="602.8" r="1.8" fill="#fff"/>
<path d="M798,612 V609.6 L801,607.4 L803.4,609.2 L807.6,604.8 L812,609.8 V612Z" fill="#fff"/>
<!-- layout -->
<rect x="829.6" y="600.4" width="19.2" height="10.4" rx=".8" fill="#1c2537"/>
<rect x="837.6" y="600.4" width="1" height="10.4" fill="#fff"/>
<rect x="831.4" y="602.4" width="4.6" height="1.2" fill="#fff"/><rect x="831.4" y="605" width="4.6" height="1.2" fill="#fff"/><rect x="831.4" y="607.6" width="3.2" height="1.2" fill="#fff"/>
</svg>

  <div class="cp">© Gurtam</div>
  <div class="tm">17:59:49 (+03)</div>
</div>

</div></div>
</body>
</html>
